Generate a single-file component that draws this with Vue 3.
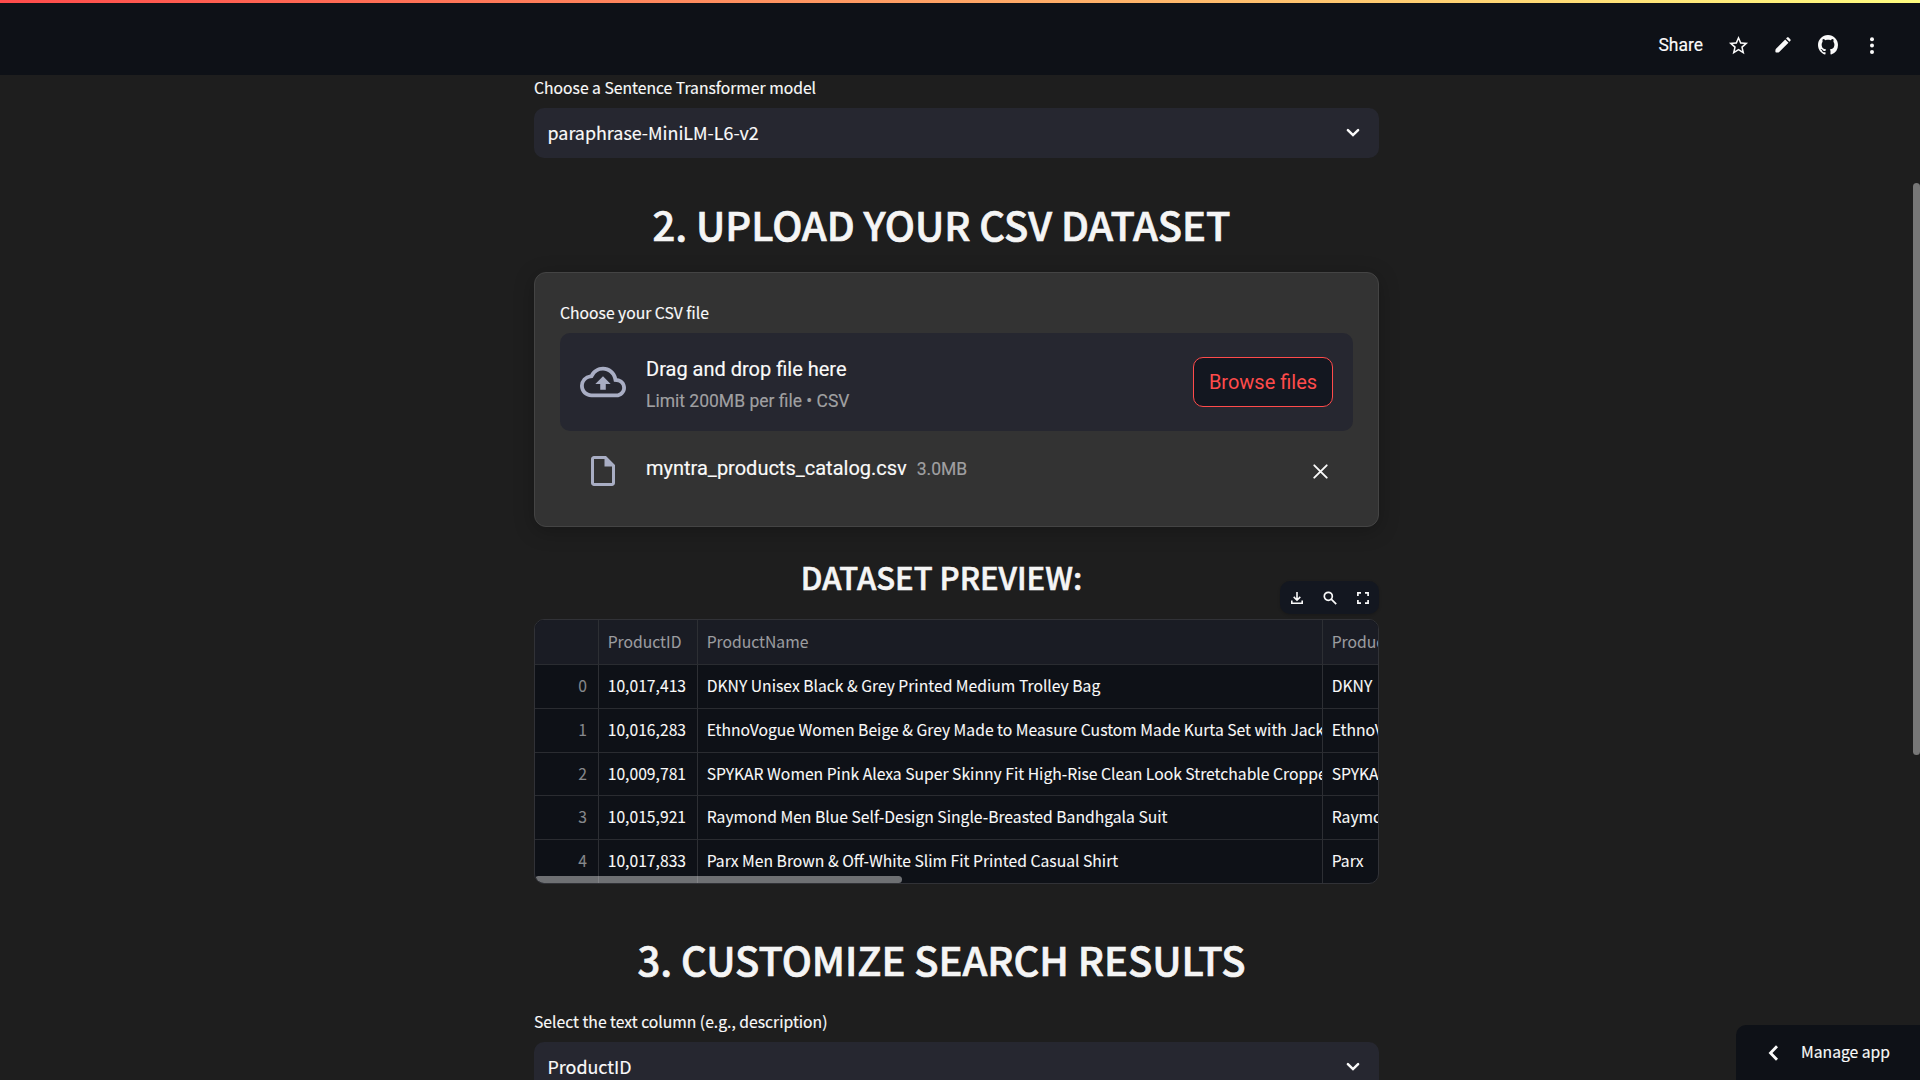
<script setup>
const columns = ['ProductID', 'ProductName', 'ProductBrand']
const rows = [
  ['10,017,413', 'DKNY Unisex Black & Grey Printed Medium Trolley Bag', 'DKNY'],
  ['10,016,283', 'EthnoVogue Women Beige & Grey Made to Measure Custom Made Kurta Set with Jacket', 'EthnoVogue'],
  ['10,009,781', 'SPYKAR Women Pink Alexa Super Skinny Fit High-Rise Clean Look Stretchable Cropped Jeans', 'SPYKAR'],
  ['10,015,921', 'Raymond Men Blue Self-Design Single-Breasted Bandhgala Suit', 'Raymond'],
  ['10,017,833', 'Parx Men Brown & Off-White Slim Fit Printed Casual Shirt', 'Parx'],
]
</script>

<template>
  <div class="page">
    <header class="header">
      <span class="share">Share</span>
      <svg class="star" width="23" height="23" viewBox="0 0 24 24" fill="currentColor"><path d="M22 9.24l-7.19-.62L12 2 9.19 8.63 2 9.24l5.46 4.73L5.82 21 12 17.27 18.18 21l-1.63-7.03L22 9.24zM12 15.4l-3.76 2.27 1-4.28-3.32-2.88 4.38-.38L12 6.1l1.71 4.04 4.38.38-3.32 2.88 1 4.28L12 15.4z" /></svg>
      <svg class="pencil" width="16" height="16" viewBox="0 0 16 16" fill="currentColor"><path d="M10.2 2.4l3.3 3.3-9.3 9.3c-.4.4-.9.6-1.4.6H1.2a.8.8 0 0 1-.8-.8v-1.6c0-.5.2-1 .6-1.4zM11.1 1.5l.9-.9c.5-.5 1.1-.5 1.6 0l1.7 1.7c.5.5.5 1.1 0 1.6l-.9.9z" /></svg>
      <svg class="github" width="20" height="20" viewBox="0 0 16 16" fill="currentColor"><path d="M8 0C3.58 0 0 3.58 0 8c0 3.54 2.29 6.53 5.47 7.59.4.07.55-.17.55-.38 0-.19-.01-.82-.01-1.49-2.01.37-2.53-.49-2.69-.94-.09-.23-.48-.94-.82-1.13-.28-.15-.68-.52-.01-.53.63-.01 1.08.58 1.23.82.72 1.21 1.87.87 2.33.66.07-.52.28-.87.51-1.07-1.78-.2-3.64-.89-3.64-3.95 0-.87.31-1.59.82-2.15-.08-.2-.36-1.02.08-2.12 0 0 .67-.21 2.2.82.64-.18 1.32-.27 2-.27s1.36.09 2 .27c1.53-1.04 2.2-.82 2.2-.82.44 1.1.16 1.92.08 2.12.51.56.82 1.27.82 2.15 0 3.07-1.87 3.75-3.65 3.95.29.25.54.73.54 1.48 0 1.07-.01 1.93-.01 2.2 0 .21.15.46.55.38A8.01 8.01 0 0 0 16 8c0-4.42-3.58-8-8-8z" /></svg>
      <svg class="dots" width="6" height="18" viewBox="0 0 6 18" fill="currentColor"><circle cx="3" cy="2.3" r="2" /><circle cx="3" cy="8.6" r="2" /><circle cx="3" cy="14.900" r="2" /></svg>
    </header>

    <main class="main">
      <label class="label">Choose a Sentence Transformer model</label>
      <div class="select">
        <span>paraphrase-MiniLM-L6-v2</span>
        <svg width="14" height="10" viewBox="0 0 14 10" fill="none" stroke="currentColor" stroke-width="2.500" stroke-linecap="round"><path d="M1.900 2.100L7 7.100l5.100-5" /></svg>
      </div>

      <h2 class="title first">2. UPLOAD YOUR CSV DATASET</h2>

      <section class="card">
        <label class="label">Choose your CSV file</label>
        <div class="dropzone">
          <svg width="46" height="46" viewBox="0 0 24 24" fill="currentColor"><path d="M19.350 10.040A7.490 7.490 0 0 0 12 4C9.110 4 6.600 5.640 5.350 8.040A5.994 5.994 0 0 0 0 14c0 3.310 2.690 6 6 6h13c2.760 0 5-2.240 5-5 0-2.640-2.050-4.780-4.650-4.960zM19 18H6c-2.210 0-4-1.790-4-4 0-2.050 1.530-3.760 3.560-3.970l1.070-.11.5-.95A5.469 5.469 0 0 1 12 6c2.620 0 4.880 1.860 5.390 4.430l.3 1.500 1.530.11A2.980 2.980 0 0 1 22 15c0 1.650-1.350 3-3 3zM8 13h2.550v3h2.900v-3H16l-4-4z" /></svg>
          <div class="hint">
            <span class="hint-main">Drag and drop file here</span>
            <small>Limit 200MB per file • CSV</small>
          </div>
          <button class="browse">Browse files</button>
        </div>
        <div class="file">
          <svg class="doc" width="36" height="36" viewBox="0 0 24 24" fill="currentColor"><path d="M6 2c-1.100 0-2 .9-2 2v16c0 1.100.9 2 2 2h12c1.100 0 2-.9 2-2V8l-6-6H6zm0 18V4h7v5h5v11H6z" /></svg>
          <span class="file-name">myntra_products_catalog.csv</span>
          <small>3.0MB</small>
          <svg class="close" width="15" height="15" viewBox="0 0 15 15" fill="none" stroke="currentColor" stroke-width="1.900" stroke-linecap="round"><path d="M1.300 1.300l12.400 12.400M13.700 1.300L1.300 13.700" /></svg>
        </div>
      </section>

      <h3 class="subtitle">DATASET PREVIEW:</h3>

      <div class="frame">
        <div class="toolbar">
          <svg width="14" height="14" viewBox="0 0 14 14" fill="none" stroke="currentColor" stroke-width="1.600"><path d="M7 1v8M3.700 5.900L7 9.200l3.300-3.300M1.800 9.500v2.700h10.400V9.500" /></svg>
          <svg width="14" height="14" viewBox="0 0 14 14" fill="none" stroke="currentColor" stroke-width="1.700"><circle cx="5.300" cy="5.300" r="4" /><path d="M8.200 8.200l5 5" /></svg>
          <svg width="14" height="14" viewBox="0 0 14 14" fill="none" stroke="currentColor" stroke-width="1.700"><path d="M1.900 5V1.900H5M9 1.900h3.100V5M12.100 9v3.100H9M5 12.100H1.900V9" /></svg>
        </div>
        <div class="table">
          <div class="row head">
            <span class="cell"></span>
            <span v-for="c in columns" :key="c" class="cell">{{ c }}</span>
          </div>
          <div v-for="(r, i) in rows" :key="r[0]" class="row">
            <span class="cell index">{{ i }}</span>
            <span v-for="c in r" :key="c" class="cell">{{ c }}</span>
          </div>
          <div class="hscroll"></div>
        </div>
      </div>

      <h2 class="title second">3. CUSTOMIZE SEARCH RESULTS</h2>

      <label class="label">Select the text column (e.g., description)</label>
      <div class="select">
        <span>ProductID</span>
        <svg width="14" height="10" viewBox="0 0 14 10" fill="none" stroke="currentColor" stroke-width="2.500" stroke-linecap="round"><path d="M1.900 2.100L7 7.100l5.100-5" /></svg>
      </div>
    </main>

    <div class="vscroll"></div>
    <div class="manage">
      <svg width="11" height="16" viewBox="0 0 11 16" fill="none" stroke="currentColor" stroke-width="2.800"><path d="M9 1.300L2.500 8 9 14.700" /></svg>
      <span>Manage app</span>
    </div>
  </div>
</template>

<style>
body {
  background: #1e1e1e;
  overflow: hidden;
}
</style>

<style scoped>
* {
  box-sizing: border-box;
}
.page {
  position: relative;
  height: 1080px;
  overflow: hidden;
  background: #1e1e1e;
  color: #fafafa;
  font-family: "Noto Sans CJK SC", sans-serif;
  -webkit-text-stroke: 0.15px;
}
svg {
  display: block;
  flex: none;
}
.header {
  display: flex;
  align-items: flex-start;
  justify-content: flex-end;
  height: 75px;
  padding-right: 45px;
  background: linear-gradient(90deg, #ff4b4b, #fffd80) top / 100% 3px no-repeat #0e1117;
}
.share {
  margin: 35px 23.5px 0 0;
  font: 17.5px/20px Roboto, sans-serif;
}
.star { margin: 33.5px 25.5px 0 0; }
.pencil { margin: 37px 27px 0 0; }
.github { margin: 35px 31px 0 0; }
.dots { margin-top: 37px; }

.main {
  display: flex;
  flex-direction: column;
  width: 845px;
  margin-left: 534px;
}
.label {
  display: block;
  font-size: 15.7px;
  line-height: 26px;
  white-space: nowrap;
}
.select {
  display: flex;
  align-items: flex-start;
  justify-content: space-between;
  height: 50px;
  margin-top: 7px;
  padding: 0 19px 0 13.5px;
  border-radius: 10px;
  background: #262730;
  font-size: 17.9px;
  line-height: 48px;
}
.select svg { margin-top: 20px; }
.title,
.subtitle {
  margin: 0;
  padding-right: 30px;
  color: #f5f5f5;
  font-weight: 500;
  text-align: center;
  white-space: nowrap;
}
.title {
  font-size: 40px;
  letter-spacing: -0.06px;
  line-height: 61px;
  -webkit-text-stroke: 0.7px #f5f5f5;
}
.first { margin: 36px 0 17px; }
.second { margin: 45px 0 19px; }
.subtitle {
  margin: 27px 0 20px;
  font-size: 31px;
  line-height: 45px;
  -webkit-text-stroke: 0.6px #f5f5f5;
}
.card {
  height: 255px;
  padding: 27px 25px 0;
  border: 1px solid #444;
  border-radius: 12px;
  background: #333;
  box-shadow: 0 4px 20px rgba(0, 0, 0, 0.25);
}
.dropzone {
  display: flex;
  align-items: center;
  height: 98px;
  margin-top: 7px;
  padding: 0 20px;
  border-radius: 10px;
  background: #262730;
  font-family: Roboto, sans-serif;
}
.dropzone svg,
.doc {
  color: #a9aec4;
}
.hint {
  display: flex;
  flex: 1;
  flex-direction: column;
  gap: 10px;
  margin: 4px 0 0 20px;
}
.hint-main {
  font-size: 20px;
  line-height: 24px;
}
small {
  color: #a0a0a2;
  font-size: 17.5px;
  line-height: 20px;
}
.browse {
  width: 140px;
  height: 50px;
  padding: 0;
  border: 1px solid #ff4b4b;
  border-radius: 10px;
  background: #131720;
  color: #ff4b4b;
  font: 20px/24px Roboto, sans-serif;
  -webkit-text-stroke: 0;
}
.file {
  display: flex;
  align-items: flex-start;
  padding: 22px 25px 0;
  font-family: Roboto, sans-serif;
}
.file-name {
  margin: 3px 10px 0 25px;
  font-size: 20px;
  line-height: 24px;
}
.file small { margin-top: 6px; }
.close { margin: 11px 0 0 auto; }

.frame { position: relative; }
.toolbar {
  position: absolute;
  top: -38px;
  right: 0;
  display: flex;
  align-items: center;
  gap: 19px;
  height: 33px;
  padding: 0 9px 0 10px;
  border-radius: 10px;
  background: #131720;
  box-shadow: 0 1px 3px rgba(0, 0, 0, 0.2);
}
.table {
  position: relative;
  height: 265px;
  overflow: hidden;
  border: 1px solid #313237;
  border-radius: 10px;
  background: #0e1117;
  font-size: 15.7px;
  -webkit-text-stroke: 0.08px;
}
.row {
  display: grid;
  grid-template-columns: 64px 99px 625px 130px;
  height: 44px;
  line-height: 41px;
}
.row:nth-child(4) { height: 43px; }
.head {
  height: 45px;
  background: #1a1c24;
  color: #9c9da0;
  line-height: 43px;
}
.cell {
  overflow: hidden;
  padding-left: 8.7px;
  border-right: 1px solid #2d2f34;
  border-bottom: 1px solid #2a2c31;
  white-space: nowrap;
}
.index {
  padding-right: 11px;
  color: #86888c;
  text-align: right;
}
.hscroll {
  position: absolute;
  bottom: 0;
  left: 0;
  width: 367px;
  height: 7px;
  border-radius: 4px;
  background: rgba(255, 255, 255, 0.4);
}
.vscroll {
  position: absolute;
  top: 183px;
  right: 0;
  width: 7px;
  height: 572px;
  border-radius: 4px;
  background: #777;
}
.manage {
  position: absolute;
  right: 0;
  bottom: 0;
  display: flex;
  width: 184px;
  height: 55px;
  padding-left: 32px;
  border-radius: 10px 0 0;
  background: #0e1117;
  font-size: 15.7px;
  line-height: 53px;
}
.manage svg { margin: 20px 22px 0 0; }
</style>
